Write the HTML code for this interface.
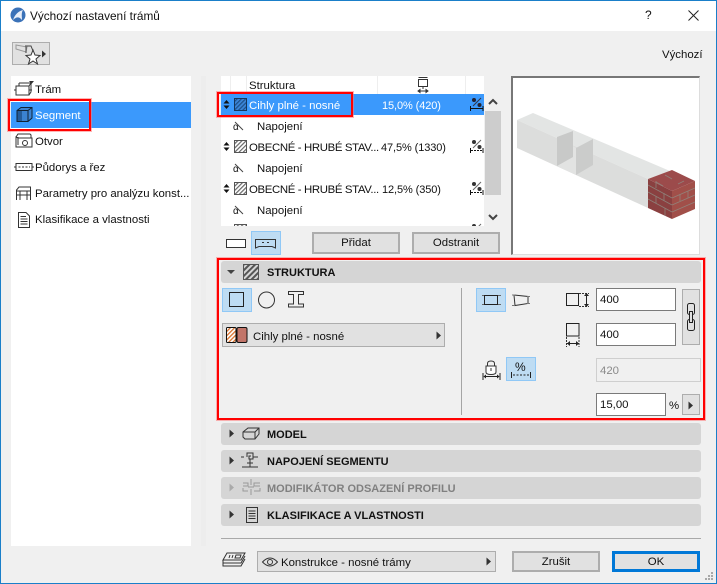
<!DOCTYPE html>
<html><head><meta charset="utf-8">
<style>
html,body{margin:0;padding:0}
body{width:717px;height:584px;overflow:hidden;position:relative;background:#f0f0f0;font-family:"Liberation Sans",sans-serif;font-size:11.4px;color:#111}
.a{position:absolute}
.t{position:absolute;white-space:nowrap;line-height:14px}
.n{font-size:11px;letter-spacing:-.1px}
.ob{letter-spacing:-.36px}
.btn{position:absolute;background:#e1e1e1;border:2px solid #adadad;box-sizing:border-box;text-align:center;line-height:19px}
.sec{position:absolute;left:221px;width:480px;height:22px;background:#d5d5d5;border-radius:3px}
.sec b{position:absolute;left:46px;top:5px;line-height:14px;font-size:11px;white-space:nowrap}
.inp{position:absolute;background:#fff;border:1px solid #7a7a7a;box-sizing:border-box;line-height:23px;padding-left:3px;height:23px}
svg{position:absolute;overflow:visible}
.red{position:absolute;border:2px solid #f00;box-shadow:0 0 0 1px rgba(255,120,120,.55);box-sizing:border-box}
.s{fill:none;stroke:#333;stroke-width:1}
</style></head><body>
<!-- window -->
<div class="a" style="left:0;top:0;width:717px;height:31px;background:#fff"></div>
<div class="a" style="left:0;top:0;width:717px;height:1px;background:#1a7fc9"></div>
<div class="a" style="left:0;top:0;width:1px;height:584px;background:#1a7fc9"></div>
<div class="a" style="right:0;top:0;width:1px;height:584px;background:#1a7fc9"></div>
<div class="a" style="left:0;bottom:0;width:717px;height:1px;background:#1a7fc9"></div>
<svg style="left:10px;top:7px" width="16" height="16" viewBox="0 0 16 16"><circle cx="8" cy="8" r="7.5" fill="#3b72b8"/><path d="M3 13C5 7 9 4 13 3 11 6 12 10 12 13 9 9 6 10 3 13Z" fill="#e8eef8"/></svg>
<div class="t" style="left:30px;top:9px;font-size:11.8px">Výchozí nastavení trámů</div>
<div class="t" style="left:645px;top:8px;font-size:12px">?</div>
<svg style="left:688px;top:10px" width="11" height="11"><path d="M.5.5L10.5 10.5M10.5.5L.5 10.5" stroke="#222" fill="none"/></svg>

<!-- favorites button -->
<div class="a" style="left:12px;top:42px;width:38px;height:23px;background:#e1e1e1;border:1px solid #adadad;box-sizing:border-box"></div>
<svg style="left:12px;top:42px" width="38" height="23"><path d="M4 3L15 5 14 10 4 7Z" fill="none" stroke="#999"/><path d="M13 4H19L21 9M14 5V11" fill="none" stroke="#444"/><path d="M21 8L23 13 28 13.500 24 17 25.500 22 21 19 16.500 22 18 17 14 13.500 19 13Z" fill="#fff" stroke="#333"/><path d="M30 8.500L34 12 30 15.500Z" fill="#333"/></svg>
<div class="t" style="left:662px;top:48px">Výchozí</div>

<!-- side list -->
<div class="a" style="left:11px;top:76px;width:180px;height:470px;background:#fff"></div>
<div class="a" style="left:201px;top:76px;width:5px;height:470px;background:#ededed"></div>
<div class="a" style="left:11px;top:102px;width:180px;height:26px;background:#3b99fc"></div>
<svg style="left:14px;top:80px" width="20" height="18"><path d="M2 6H15V15H2ZM5 6V3M15 6L17 3H5M15 15L17 12V3" class="s"/><path d="M15 1H20L17.500 4Z" fill="#333"/><path d="M0 10H2M15 10H18" class="s"/></svg>
<svg style="left:16px;top:107px" width="18" height="16"><path d="M1 3.500L5 .5H16V11L12 14.500H1Z" fill="#3b82d0" stroke="#123"/><path d="M1 3.500H12V14.500M12 3.500L16 .5" fill="none" stroke="#123"/><path d="M1.500 4H6V14H1.500Z" fill="#245b99"/></svg>
<svg style="left:15px;top:133px" width="18" height="16"><path d="M1 4L3 1H15L16 2V5M1 4V14H17V5H3ZM3 4V12" class="s"/><circle cx="10" cy="10" r="2.500" class="s"/></svg>
<svg style="left:14px;top:161px" width="20" height="12"><path d="M2 2.500H18V9.500H2ZM0 6H2M18 6H20" class="s"/><path d="M4.500 6H16" stroke="#333" stroke-dasharray="2 1.500"/></svg>
<svg style="left:15px;top:186px" width="18" height="15"><path d="M1.500 14V4L4 1H15.500V14M15.500 5H1.500M1.500 9H15.500M5 5V14M12 5V14" class="s"/></svg>
<svg style="left:17px;top:212px" width="14" height="16"><path d="M1.500.5H9L12.500 4V15.500H1.500Z" class="s"/><path d="M3.500 4.500H9M3.500 7H10.500M3.500 9.500H10.500M3.500 12H10.500" stroke="#333"/></svg>
<div class="t" style="left:35px;top:83px">Trám</div>
<div class="t" style="left:35px;top:109px;color:#fff">Segment</div>
<div class="t" style="left:35px;top:135px">Otvor</div>
<div class="t" style="left:35px;top:161px">Půdorys a řez</div>
<div class="t" style="left:35px;top:187px">Parametry pro analýzu konst...</div>
<div class="t" style="left:35px;top:213px">Klasifikace a vlastnosti</div>
<div class="red" style="left:8px;top:99px;width:83px;height:32px"></div>

<!-- structure list -->
<div class="a" style="left:221px;top:76px;width:263px;height:150px;background:#fff;overflow:hidden">
 <div class="a" style="left:9px;top:0;width:1px;height:18px;background:#eee"></div>
 <div class="a" style="left:25px;top:0;width:1px;height:18px;background:#eee"></div>
 <div class="a" style="left:156px;top:0;width:1px;height:18px;background:#eee"></div>
 <div class="a" style="left:244px;top:0;width:1px;height:18px;background:#eee"></div>
 <div class="t" style="left:28px;top:3px">Struktura</div>
 <svg style="left:195px;top:1px" width="14" height="16"><path d="M2.500.5H11.500M2.500 2.500H11.500V9.500H2.500ZM7 9.500V12" class="s"/><path d="M2 14H12M2 14L4 12.500V15.500ZM12 14L10 12.500V15.500Z" fill="#333" stroke="#333"/></svg>
 <div class="a" style="left:0;top:18px;width:263px;height:21px;background:#3b99fc"></div>
 <div class="t" style="left:28px;top:23px;color:#fff">Cihly plné - nosné</div>
 <div class="t n" style="left:161px;top:23px;color:#fff">15,0% (420)</div>
 <div class="t" style="left:36px;top:44px">Napojení</div>
 <div class="t ob" style="left:28px;top:65px">OBECNÉ - HRUBÉ STAV...</div>
 <div class="t n" style="left:160px;top:65px">47,5% (1330)</div>
 <div class="t" style="left:36px;top:86px">Napojení</div>
 <div class="t ob" style="left:28px;top:107px">OBECNÉ - HRUBÉ STAV...</div>
 <div class="t n" style="left:161px;top:107px">12,5% (350)</div>
 <div class="t" style="left:36px;top:128px">Napojení</div>
 <div class="t" style="left:12px;top:45px;font-size:10px">α</div>
 <div class="t" style="left:12px;top:87px;font-size:10px">α</div>
 <div class="t" style="left:12px;top:129px;font-size:10px">α</div>
 <svg style="left:0;top:0" width="263" height="150">
  <defs><pattern id="h" width="3" height="3" patternUnits="userSpaceOnUse" patternTransform="rotate(-45)"><rect width="3" height="3" fill="#fff"/><rect width="3" height="1.200" fill="#666"/></pattern>
  <pattern id="hb" width="3" height="3" patternUnits="userSpaceOnUse" patternTransform="rotate(-45)"><rect width="3" height="3" fill="#3b85d8"/><rect width="3" height="1.200" fill="#1d4f88"/></pattern>
  <pattern id="hg" width="4" height="4" patternUnits="userSpaceOnUse" patternTransform="rotate(-45)"><rect width="4" height="4" fill="#d5d5d5"/><rect width="4" height="2" fill="#555"/></pattern>
  <pattern id="ho" width="3" height="3" patternUnits="userSpaceOnUse" patternTransform="rotate(-45)"><rect width="3" height="3" fill="#fff"/><rect width="3" height="1.300" fill="#d9702a"/></pattern></defs>
  <rect x="13.500" y="22.500" width="12" height="12" fill="url(#hb)" stroke="#16365c"/>
  <rect x="13.500" y="64.500" width="12" height="12" fill="url(#h)" stroke="#555"/>
  <rect x="13.500" y="106.500" width="12" height="12" fill="url(#h)" stroke="#555"/>
  <rect x="13.500" y="148.500" width="12" height="12" fill="url(#h)" stroke="#555"/>
  <path d="M2.500 27.500L5.500 24 8.500 27.500ZM2.500 29.500H8.500L5.500 33Z" fill="#111"/>
  <path d="M2.500 69.500L5.500 66 8.500 69.500ZM2.500 71.500H8.500L5.500 75Z" fill="#111"/>
  <path d="M2.500 111.500L5.500 108 8.500 111.500ZM2.500 113.500H8.500L5.500 117Z" fill="#111"/>
  <g fill="none" stroke="#444"><path d="M14 46L22 54M14 88L22 96M14 130L22 138"/></g>
  <g id="p1"><path d="M249.500 30V35M262 30V35" stroke="#111"/><path d="M250 32.500H262" stroke="#111"/><path d="M260 22L252 30" stroke="#334" fill="none"/><circle cx="253" cy="24" r="2" fill="#223"/><circle cx="258.500" cy="29" r="2" fill="#223"/></g>
  <g transform="translate(0,42)"><path d="M249.500 30V35M262 30V35" stroke="#111"/><path d="M250 32.500H262" stroke="#111" stroke-dasharray="2 1"/><path d="M260 22L252 30" stroke="#666" fill="none"/><circle cx="253" cy="24" r="2" fill="#333"/><circle cx="258.500" cy="29" r="2" fill="#333"/></g>
  <g transform="translate(0,84)"><path d="M249.500 30V35M262 30V35" stroke="#111"/><path d="M250 32.500H262" stroke="#111" stroke-dasharray="2 1"/><path d="M260 22L252 30" stroke="#666" fill="none"/><circle cx="253" cy="24" r="2" fill="#333"/><circle cx="258.500" cy="29" r="2" fill="#333"/></g>
  <g transform="translate(0,126)"><path d="M260 22L252 30" stroke="#666" fill="none"/><circle cx="253" cy="24" r="2" fill="#333"/></g>
 </svg>
</div>
<div class="a" style="left:485px;top:111px;width:16px;height:84px;background:#cdcdcd"></div>
<svg style="left:488px;top:97px" width="10" height="8"><path d="M1 7L5 3 9 7" fill="none" stroke="#444" stroke-width="2"/></svg>
<svg style="left:488px;top:214px" width="10" height="8"><path d="M1 1L5 5 9 1" fill="none" stroke="#444" stroke-width="2"/></svg>
<div class="red" style="left:217px;top:92px;width:136px;height:25px"></div>

<svg style="left:226px;top:239px" width="20" height="9"><rect x=".5" y=".5" width="19" height="8" fill="#fff" stroke="#333"/></svg>
<div class="a" style="left:251px;top:231px;width:30px;height:24px;background:#bedcf3;border:1px solid #90c8f6;box-sizing:border-box"></div>
<svg style="left:255px;top:238px" width="22" height="12"><path d="M.5 1.500H20.500V10L17 8.500H4L.5 10Z" fill="none" stroke="#333"/><path d="M7 4.500H9M12 4.500H14" stroke="#333"/></svg>
<div class="btn" style="left:312px;top:232px;width:88px;height:22px">Přidat</div>
<div class="btn" style="left:412px;top:232px;width:88px;height:22px">Odstranit</div>

<!-- preview -->
<div class="a" style="left:511px;top:76px;width:189px;height:179px;background:#fff;border-top:2px solid #777;border-left:2px solid #777;border-right:1px solid #ddd;border-bottom:1px solid #ddd;box-sizing:border-box"></div>
<svg style="left:500px;top:76px" width="217" height="180">
 <path d="M17 44L33 37 170 95 148 103Z" fill="#e3e5e4"/>
 <path d="M17 44V72L148 132V103Z" fill="#dcdddc"/>
 <path d="M57 61L76 72V99L57 90Z" fill="#e2e3e2"/>
 <path d="M57 61L73 55V81L57 90Z" fill="#c8c9c8"/>
 <path d="M76 72L93 63V89L76 99Z" fill="#cbcccb"/>
 <path d="M148 103L172 94 195 105 172 115Z" fill="#9c4b4b"/>
 <path d="M148 103L172 115V143L148 132Z" fill="#8a4040"/>
 <path d="M172 115L195 105V133L172 143Z" fill="#a14f49"/>
 <g stroke="#8f8f86" stroke-width=".8" fill="none" opacity=".8">
  <path d="M148 109L172 122M148 116L172 129M148 123L172 136M172 122L195 112M172 129L195 119M172 136L195 126"/>
  <path d="M156 106L163 110M165 99L172 103M178 108L184 105"/>
  <path d="M156 105V112M164 117V125M156 120V127M165 132V140M180 118V125M188 115V122"/>
 </g>
</svg>

<!-- structure panel -->
<div class="sec" style="top:261px"><b style="left:46px">STRUKTURA</b></div>
<svg style="left:226px;top:269px" width="10" height="6"><path d="M1 1H9L5 5Z" fill="#444"/></svg>
<svg style="left:243px;top:264px" width="16" height="16"><rect width="15" height="15" x=".5" y=".5" fill="url(#hg)" stroke="#555"/></svg>
<div class="red" style="left:217px;top:258px;width:488px;height:162px"></div>

<div class="a" style="left:222px;top:288px;width:30px;height:24px;background:#bedcf3;border:1px solid #90c8f6;box-sizing:border-box"></div>
<svg style="left:229px;top:292px" width="16" height="16"><rect x=".5" y=".5" width="14" height="14" fill="none" stroke="#222"/></svg>
<svg style="left:257px;top:291px" width="20" height="18"><circle cx="9.500" cy="9" r="8" fill="none" stroke="#333"/></svg>
<svg style="left:288px;top:291px" width="17" height="17"><path d="M.5.500H15.500V3.500H10.500V13H15.500V16H.5V13H5.500V3.500H.5Z" fill="none" stroke="#333"/></svg>
<div class="a" style="left:222px;top:323px;width:223px;height:24px;background:#e1e1e1;border:1px solid #adadad;box-sizing:border-box"></div>
<svg style="left:226px;top:327px" width="24" height="17"><rect x=".5" y=".5" width="9.500" height="15" rx="1" fill="url(#ho)" stroke="#111"/><rect x="11" y=".5" width="10" height="15" rx="1.500" fill="#c27569" stroke="#111"/></svg>
<div class="t" style="left:253px;top:330px">Cihly plné - nosné</div>
<svg style="left:436px;top:331px" width="6" height="9"><path d="M.5.500L5 4.500 .5 8.500Z" fill="#333"/></svg>

<div class="a" style="left:461px;top:288px;width:1px;height:127px;background:#a5a5a5"></div>
<div class="a" style="left:476px;top:288px;width:30px;height:24px;background:#bedcf3;border:1px solid #90c8f6;box-sizing:border-box"></div>
<svg style="left:482px;top:294px" width="19" height="12"><rect x="2.500" y="1.500" width="13" height="9" fill="none" stroke="#222"/><path d="M0 1.500H2M16 1.500H19M0 10.500H2M16 10.500H19" stroke="#666"/></svg>
<svg style="left:512px;top:293px" width="19" height="14"><path d="M2 2L16 3.500V10.500L3 12.500Z" fill="none" stroke="#333"/><path d="M0 2H3M0 12.500H3M15 3.500H18M15 10.500H18" stroke="#777"/></svg>
<svg style="left:566px;top:292px" width="25" height="17"><rect x=".5" y="1.500" width="12" height="12" fill="none" stroke="#222"/><path d="M13 1.500H23M13 14.500H23" stroke="#333" stroke-dasharray="2 1"/><path d="M20.500 3V13" stroke="#222"/><path d="M18 4L20.500 1 23 4ZM18 12L20.500 15 23 12Z" fill="#222"/></svg>
<svg style="left:566px;top:323px" width="16" height="25"><rect x=".5" y=".5" width="12.500" height="12.500" fill="none" stroke="#222"/><path d="M.5 14V24M13 14V24" stroke="#333" stroke-dasharray="2 1"/><path d="M1 20.500H13" stroke="#222"/><path d="M4 18L1 20.500 4 23ZM10 18L13 20.500 10 23Z" fill="#222"/></svg>
<div class="inp" style="left:596px;top:288px;width:80px">400</div>
<div class="inp" style="left:596px;top:323px;width:80px">400</div>
<div class="a" style="left:682px;top:289px;width:18px;height:56px;background:#e1e1e1;border:1px solid #adadad;box-sizing:border-box"></div>
<svg style="left:686px;top:302px" width="11" height="30"><rect x="1.500" y="1.500" width="7" height="11" rx="2" fill="none" stroke="#222"/><rect x="1.500" y="17.500" width="7" height="11" rx="2" fill="none" stroke="#222"/><path d="M3.500 9.500H6.500V20.500H3.500Z" fill="#e1e1e1" stroke="#222"/></svg>
<svg style="left:482px;top:360px" width="19" height="21"><path d="M5.500 6V3.500Q5.500 1 9 1 12.500 1 12.500 3.500V6" fill="none" stroke="#333"/><path d="M4 6H14V12Q14 14.500 9 14.500 4 14.500 4 12Z" fill="#fff" stroke="#333"/><path d="M9 8V11" stroke="#333"/><path d="M1 13V20M18 13V20M2 16.500H17" stroke="#222"/><path d="M4 14.500L1.500 16.500 4 18.500ZM15 14.500L17.500 16.500 15 18.500Z" fill="#222"/></svg>
<div class="a" style="left:506px;top:357px;width:30px;height:24px;background:#bedcf3;border:1px solid #90c8f6;box-sizing:border-box"></div>
<div class="t" style="left:515px;top:360px;font-size:12px">%</div>
<svg style="left:511px;top:372px" width="20" height="7"><path d="M.5 0V6M19.500 0V6" stroke="#222"/><path d="M2 3H18" stroke="#222" stroke-dasharray="2 1.500"/></svg>
<div class="inp" style="left:596px;top:358px;width:105px;background:#f0f0f0;border-color:#cfcfcf;color:#8a8a8a;height:24px;line-height:24px">420</div>
<div class="inp" style="left:596px;top:393px;width:70px;height:23px;line-height:23px">15,00</div>
<div class="t" style="left:669px;top:399px">%</div>
<div class="a" style="left:682px;top:394px;width:18px;height:21px;background:#e1e1e1;border:1px solid #adadad;box-sizing:border-box"></div>
<svg style="left:688px;top:401px" width="6" height="9"><path d="M.5.500L5 4.500 .5 8.500Z" fill="#333"/></svg>

<!-- collapsed sections -->
<div class="sec" style="top:423px"><b>MODEL</b></div>
<div class="sec" style="top:450px"><b>NAPOJENÍ SEGMENTU</b></div>
<div class="sec" style="top:477px"><b style="color:#808080">MODIFIKÁTOR ODSAZENÍ PROFILU</b></div>
<div class="sec" style="top:504px"><b>KLASIFIKACE A VLASTNOSTI</b></div>
<svg style="left:229px;top:429px" width="6" height="90"><path d="M.5.500L5 4.500 .5 8.500Z" fill="#333"/><path d="M.5 27.500L5 31.500 .5 35.500Z" fill="#333"/><path d="M.5 54.500L5 58.500 .5 62.500Z" fill="#aaa"/><path d="M.5 81.500L5 85.500 .5 89.500Z" fill="#333"/></svg>
<svg style="left:242px;top:427px" width="18" height="13"><path d="M1 5L6 1H17V7L13 12H3L1 10ZM1 5H13V12M13 5L17 1" fill="none" stroke="#333"/></svg>
<svg style="left:241px;top:452px" width="20" height="18"><path d="M0 5H3M6 5V1H12V7H8V4H10M12 5H17M9 7V15M1 15H17M6 11H12" fill="none" stroke="#333"/></svg>
<svg style="left:243px;top:479px" width="17" height="17"><path d="M0 4H5V7H0M17 4H11V7H17M8 0V6M5 12H0V9M11 12H17V9M8 10V16M5 8H11" fill="none" stroke="#999"/></svg>
<svg style="left:245px;top:507px" width="14" height="16"><path d="M1.500.5H12.500V15.500H1.500Z" fill="none" stroke="#333"/><path d="M3.500 4H10.500M3.500 6.500H10.500M3.500 9H10.500M3.500 11.500H10.500" stroke="#333"/></svg>

<div class="a" style="left:221px;top:538px;width:480px;height:1px;background:#a9a9a9"></div>
<svg style="left:222px;top:552px" width="24" height="17"><path d="M5 1H23L19 8H1Z" fill="#f0f0f0" stroke="#333"/><path d="M8 3L7 6M11 3L10 6M14 3H19L18 6H13Z" fill="none" stroke="#333"/><path d="M1 8V11H19L23 4M1 11V14H19L23 7" fill="none" stroke="#333"/></svg>
<div class="a" style="left:257px;top:551px;width:239px;height:21px;background:#e1e1e1;border:1px solid #adadad;box-sizing:border-box"></div>
<svg style="left:262px;top:557px" width="16" height="10"><path d="M.5 5Q8-3 15.500 5 8 13 .5 5Z" fill="none" stroke="#333"/><circle cx="8" cy="5" r="2.500" fill="none" stroke="#333"/></svg>
<div class="t" style="left:281px;top:556px">Konstrukce - nosné trámy</div>
<svg style="left:486px;top:557px" width="6" height="9"><path d="M.5.500L5 4.500 .5 8.500Z" fill="#333"/></svg>
<div class="btn" style="left:512px;top:551px;width:88px;height:21px">Zrušit</div>
<div class="btn" style="left:612px;top:551px;width:88px;height:21px;border-color:#0078d7;border-width:3px;line-height:17px">OK</div>
<svg style="left:705px;top:572px" width="10" height="10" fill="#a8a8a8"><rect x="6" y="0" width="2" height="2"/><rect x="3" y="3" width="2" height="2"/><rect x="6" y="3" width="2" height="2"/><rect x="0" y="6" width="2" height="2"/><rect x="3" y="6" width="2" height="2"/><rect x="6" y="6" width="2" height="2"/></svg>
</body></html>
